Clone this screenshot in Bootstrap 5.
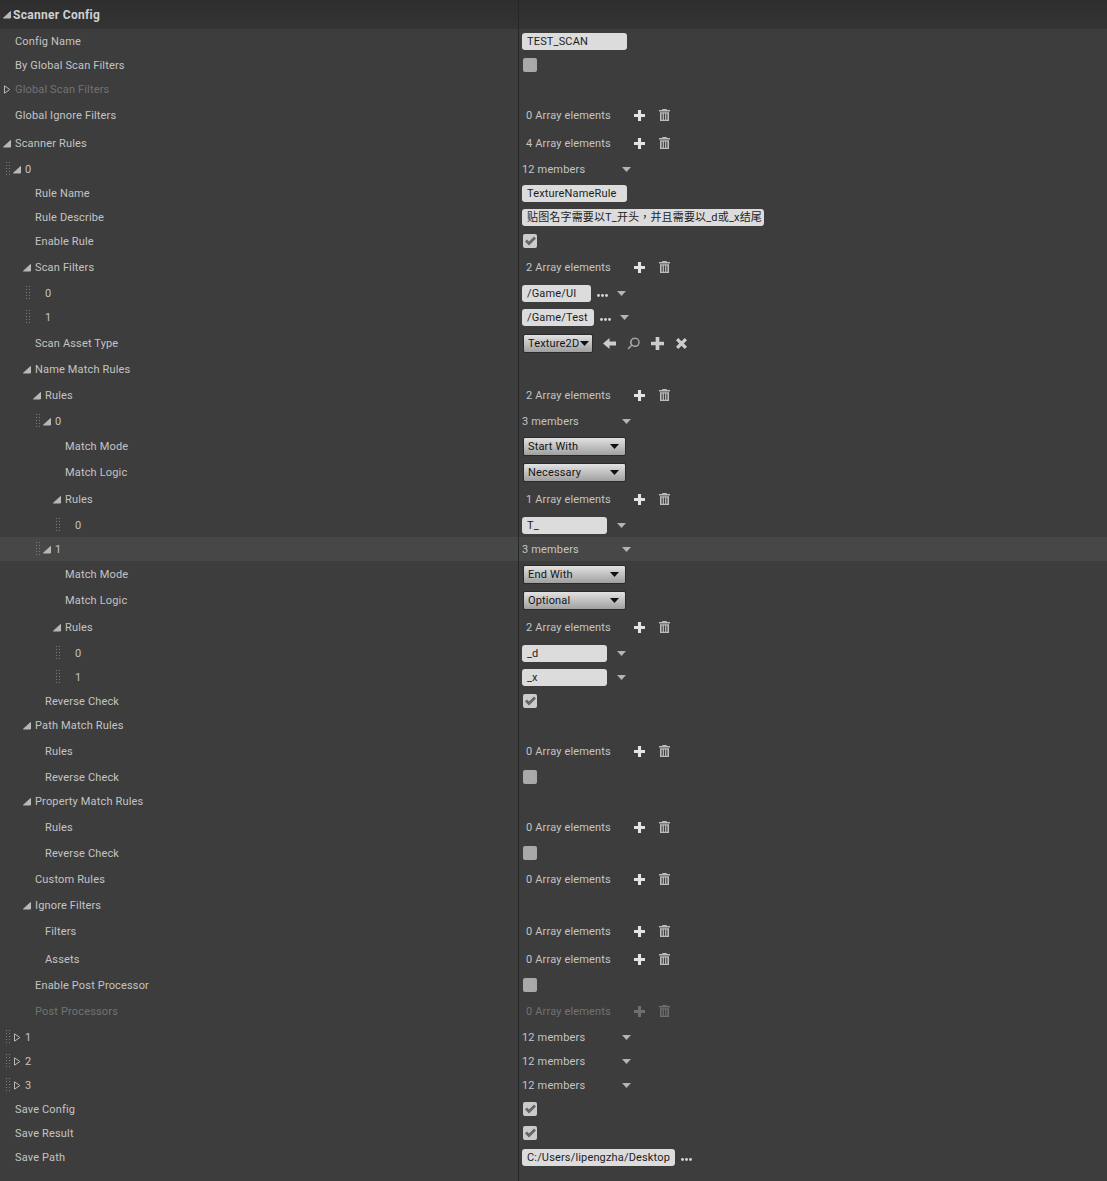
<!DOCTYPE html>
<html lang="zh">
<head>
<meta charset="UTF-8">
<title>Scanner Config</title>
<link href="https://cdn.jsdelivr.net/npm/bootstrap@5.3.0/dist/css/bootstrap.min.css" rel="stylesheet">
<style>
    body { background: #3d3d3d; color: #c4c4c4; font: 11px/1 Roboto, "Noto Sans CJK TC", sans-serif; letter-spacing: .16px; min-height: 1181px; }
    .dp-head { height: 29px; background: linear-gradient(#2e2e2e, #343434); color: #d0d0d0; font-size: 12px; font-weight: 700; letter-spacing: .3px; }
    .dp-head .dp-name { padding-left: 3px; }
    .dp-head .dp-text { margin-left: -2px; }
    .dp-name { width: 518px; height: 100%; flex: none; }
    .dp-val { border-left: 1px solid #262626; height: 100%; padding-left: 3px; flex: 1; }
    .dp-tail { height: 12px; }
    .rh24 { height: 24px; } .rh26 { height: 26px; } .rh28 { height: 28px; }
    .dp-hover { background: #474747; }
    .dp-off { color: #727272; }
    .t15 { padding-left: 3px; } .t25 { padding-left: 13px; } .t35 { padding-left: 23px; }
    .t45 { padding-left: 33px; } .t55 { padding-left: 43px; } .t65 { padding-left: 53px; } .t75 { padding-left: 63px; }
    .twist { width: 12px; height: 9px; flex: none; display: flex; }
    .twist svg { width: 8px; height: 9px; fill: #b8b8b8; stroke: #b8b8b8; }
    .twist.shut svg { fill: none; }
    .grip { width: 4px; height: 14px; margin-left: -7px; margin-right: 3px; flex: none;
        background: repeating-linear-gradient(#7c7c7c 0 1px, transparent 1px 3px) left / 1px 100% no-repeat,
                    repeating-linear-gradient(#7c7c7c 0 1px, transparent 1px 3px) right / 1px 100% no-repeat; }
    .field { height: 17px; background: #dcdcdc; color: #1c1c1c; border-radius: 3px; padding-left: 5px; flex: none; display: flex; align-items: center; white-space: nowrap; }
    .w105 { width: 105px; } .w85 { width: 85px; } .w69 { width: 69px; } .w72 { width: 72px; } .w153 { width: 153px; } .w242 { width: 242px; }
    .tick { width: 14px; height: 14px; margin-left: 1px; border-radius: 2px; background: #a9a9a9; flex: none; display: flex; align-items: center; justify-content: center; }
    .tick.on { background: #cbcbcb; }
    .tick svg { width: 11px; height: 10px; fill: #666; }
    .arr-txt { width: 112px; padding-left: 4px; flex: none; }
    .ico-plus { width: 11px; height: 11px; fill: #e4e4e4; flex: none; }
    .ico-bin { width: 11px; height: 12px; margin-left: 14px; fill: #bdbdbd; flex: none; }
    .dp-off .ico-plus, .dp-off .ico-bin { fill: #6e6e6e; }
    .mem-txt { width: 100px; flex: none; }
    .tri { width: 9px; height: 5px; fill: #b4b4b4; flex: none; }
    .dots { width: 11px; height: 3px; margin: 4px 0 0 6px; fill: #d8d8d8; flex: none; }
    .dots + .tri { margin-left: 9px; }
    .field + .tri { margin-left: 10px; }
    .combo { height: 19px; margin-left: 1px; background: linear-gradient(#e2e2e2, #a0a0a0); color: #151515; border: 1px solid #2a2a2a; border-radius: 2px; padding: 0 5px 0 4px; display: flex; align-items: center; justify-content: space-between; flex: none; }
    .combo svg { width: 11px; height: 5px; fill: #111; flex: none; }
    .cb-wide { width: 103px; }
    .cb-tex { width: 70px; padding-right: 2px; }
    .tool { fill: #cdcdcd; width: 13px; height: 13px; flex: none; }
    .tool-a { margin-left: 10px; } .tool-b { margin-left: 11px; }
    .tool-dim { fill: #a2a2a2; }
</style>
</head>
<body>
<svg class="d-none">
    <symbol id="i-open" viewBox="0 0 8 9"><path d="M7.5 1.5V8H.5z"/></symbol>
    <symbol id="i-shut" viewBox="0 0 8 9"><path d="M1.5.8 6.8 4.5 1.5 8.2z"/></symbol>
    <symbol id="i-check" viewBox="0 0 11 10"><path d="M0 5.5 2 3.5 4 5.6 9 .5 11 2.4 4 9.5z"/></symbol>
    <symbol id="i-plus" viewBox="0 0 12 12"><path d="M4.3 0h3.4v4.3H12v3.4H7.7V12H4.3V7.7H0V4.3h4.3z"/></symbol>
    <symbol id="i-bin" viewBox="0 0 11 12"><path d="M3.5 0h4l.5 1h3v1.5H0V1h3zM1 3.3h9V12H1zM2.6 4.5V10.8h1.1V4.5zM4.9 4.5V10.8h1.2V4.5zM7.3 4.5V10.8h1.1V4.5z" fill-rule="evenodd"/></symbol>
    <symbol id="i-tri" viewBox="0 0 9 5"><path d="M0 0h9L4.5 5z"/></symbol>
    <symbol id="i-dots" viewBox="0 0 11 3"><circle cx="1.5" cy="1.5" r="1.4"/><circle cx="5.5" cy="1.5" r="1.4"/><circle cx="9.5" cy="1.5" r="1.4"/></symbol>
    <symbol id="i-back" viewBox="0 0 13 13"><path d="M6.5 1v3.5H13v4H6.5V12L0 6.5z"/></symbol>
    <symbol id="i-find" viewBox="0 0 13 13"><path fill-rule="evenodd" d="M8 .5a4.8 4.8 0 1 1-3 8.6L1.7 12.4.6 11.3 3.8 8A4.8 4.8 0 0 1 8 .5zm0 1.5a3.3 3.3 0 1 0 0 6.6A3.3 3.3 0 0 0 8 2z"/></symbol>
    <symbol id="i-cross" viewBox="0 0 13 13"><path d="M3.3 1 6.5 4.2 9.7 1l2.3 2.3-3.2 3.2 3.2 3.2L9.7 12 6.5 8.8 3.3 12 1 9.7l3.2-3.2L1 3.3z"/></symbol>
</svg>

<div class="dp-head d-flex align-items-center">
    <div class="dp-name d-flex align-items-center"><span class="twist"><svg><use href="#i-open"/></svg></span><span class="dp-text">Scanner Config</span></div>
    <div class="dp-val"></div>
</div>

<div class="d-flex align-items-center rh24">
    <div class="dp-name d-flex align-items-center t15"><span class="twist"></span>Config Name</div>
    <div class="dp-val d-flex align-items-center"><div class="field w105">TEST_SCAN</div></div>
</div>
<div class="d-flex align-items-center rh24">
    <div class="dp-name d-flex align-items-center t15"><span class="twist"></span>By Global Scan Filters</div>
    <div class="dp-val d-flex align-items-center"><span class="tick"></span></div>
</div>
<div class="d-flex align-items-center rh24">
    <div class="dp-name d-flex align-items-center t15 dp-off"><span class="twist shut"><svg><use href="#i-shut"/></svg></span>Global Scan Filters</div>
    <div class="dp-val d-flex align-items-center"></div>
</div>
<div class="d-flex align-items-center rh28">
    <div class="dp-name d-flex align-items-center t15"><span class="twist"></span>Global Ignore Filters</div>
    <div class="dp-val d-flex align-items-center"><span class="arr-txt">0 Array elements</span><svg class="ico-plus"><use href="#i-plus"/></svg><svg class="ico-bin"><use href="#i-bin"/></svg></div>
</div>
<div class="d-flex align-items-center rh28">
    <div class="dp-name d-flex align-items-center t15"><span class="twist"><svg><use href="#i-open"/></svg></span>Scanner Rules</div>
    <div class="dp-val d-flex align-items-center"><span class="arr-txt">4 Array elements</span><svg class="ico-plus"><use href="#i-plus"/></svg><svg class="ico-bin"><use href="#i-bin"/></svg></div>
</div>
<div class="d-flex align-items-center rh24">
    <div class="dp-name d-flex align-items-center t25"><span class="grip"></span><span class="twist"><svg><use href="#i-open"/></svg></span>0</div>
    <div class="dp-val d-flex align-items-center"><span class="mem-txt">12 members</span><svg class="tri"><use href="#i-tri"/></svg></div>
</div>
<div class="d-flex align-items-center rh24">
    <div class="dp-name d-flex align-items-center t35"><span class="twist"></span>Rule Name</div>
    <div class="dp-val d-flex align-items-center"><div class="field w105">TextureNameRule</div></div>
</div>
<div class="d-flex align-items-center rh24">
    <div class="dp-name d-flex align-items-center t35"><span class="twist"></span>Rule Describe</div>
    <div class="dp-val d-flex align-items-center"><div class="field w242" lang="zh-TW">贴图名字需要以T_开头，并且需要以_d或_x结尾</div></div>
</div>
<div class="d-flex align-items-center rh24">
    <div class="dp-name d-flex align-items-center t35"><span class="twist"></span>Enable Rule</div>
    <div class="dp-val d-flex align-items-center"><span class="tick on"><svg><use href="#i-check"/></svg></span></div>
</div>
<div class="d-flex align-items-center rh28">
    <div class="dp-name d-flex align-items-center t35"><span class="twist"><svg><use href="#i-open"/></svg></span>Scan Filters</div>
    <div class="dp-val d-flex align-items-center"><span class="arr-txt">2 Array elements</span><svg class="ico-plus"><use href="#i-plus"/></svg><svg class="ico-bin"><use href="#i-bin"/></svg></div>
</div>
<div class="d-flex align-items-center rh24">
    <div class="dp-name d-flex align-items-center t45"><span class="grip"></span><span class="twist"></span>0</div>
    <div class="dp-val d-flex align-items-center"><div class="field w69">/Game/UI</div><svg class="dots"><use href="#i-dots"/></svg><svg class="tri"><use href="#i-tri"/></svg></div>
</div>
<div class="d-flex align-items-center rh24">
    <div class="dp-name d-flex align-items-center t45"><span class="grip"></span><span class="twist"></span>1</div>
    <div class="dp-val d-flex align-items-center"><div class="field w72">/Game/Test</div><svg class="dots"><use href="#i-dots"/></svg><svg class="tri"><use href="#i-tri"/></svg></div>
</div>
<div class="d-flex align-items-center rh28">
    <div class="dp-name d-flex align-items-center t35"><span class="twist"></span>Scan Asset Type</div>
    <div class="dp-val d-flex align-items-center"><div class="combo cb-tex">Texture2D<svg><use href="#i-tri"/></svg></div><svg class="tool tool-a"><use href="#i-back"/></svg><svg class="tool tool-b tool-dim"><use href="#i-find"/></svg><svg class="tool tool-b"><use href="#i-plus"/></svg><svg class="tool tool-b"><use href="#i-cross"/></svg></div>
</div>
<div class="d-flex align-items-center rh24">
    <div class="dp-name d-flex align-items-center t35"><span class="twist"><svg><use href="#i-open"/></svg></span>Name Match Rules</div>
    <div class="dp-val d-flex align-items-center"></div>
</div>
<div class="d-flex align-items-center rh28">
    <div class="dp-name d-flex align-items-center t45"><span class="twist"><svg><use href="#i-open"/></svg></span>Rules</div>
    <div class="dp-val d-flex align-items-center"><span class="arr-txt">2 Array elements</span><svg class="ico-plus"><use href="#i-plus"/></svg><svg class="ico-bin"><use href="#i-bin"/></svg></div>
</div>
<div class="d-flex align-items-center rh24">
    <div class="dp-name d-flex align-items-center t55"><span class="grip"></span><span class="twist"><svg><use href="#i-open"/></svg></span>0</div>
    <div class="dp-val d-flex align-items-center"><span class="mem-txt">3 members</span><svg class="tri"><use href="#i-tri"/></svg></div>
</div>
<div class="d-flex align-items-center rh26">
    <div class="dp-name d-flex align-items-center t65"><span class="twist"></span>Match Mode</div>
    <div class="dp-val d-flex align-items-center"><div class="combo cb-wide">Start With<svg><use href="#i-tri"/></svg></div></div>
</div>
<div class="d-flex align-items-center rh26">
    <div class="dp-name d-flex align-items-center t65"><span class="twist"></span>Match Logic</div>
    <div class="dp-val d-flex align-items-center"><div class="combo cb-wide">Necessary<svg><use href="#i-tri"/></svg></div></div>
</div>
<div class="d-flex align-items-center rh28">
    <div class="dp-name d-flex align-items-center t65"><span class="twist"><svg><use href="#i-open"/></svg></span>Rules</div>
    <div class="dp-val d-flex align-items-center"><span class="arr-txt">1 Array elements</span><svg class="ico-plus"><use href="#i-plus"/></svg><svg class="ico-bin"><use href="#i-bin"/></svg></div>
</div>
<div class="d-flex align-items-center rh24">
    <div class="dp-name d-flex align-items-center t75"><span class="grip"></span><span class="twist"></span>0</div>
    <div class="dp-val d-flex align-items-center"><div class="field w85">T_</div><svg class="tri"><use href="#i-tri"/></svg></div>
</div>
<div class="d-flex align-items-center rh24 dp-hover">
    <div class="dp-name d-flex align-items-center t55"><span class="grip"></span><span class="twist"><svg><use href="#i-open"/></svg></span>1</div>
    <div class="dp-val d-flex align-items-center"><span class="mem-txt">3 members</span><svg class="tri"><use href="#i-tri"/></svg></div>
</div>
<div class="d-flex align-items-center rh26">
    <div class="dp-name d-flex align-items-center t65"><span class="twist"></span>Match Mode</div>
    <div class="dp-val d-flex align-items-center"><div class="combo cb-wide">End With<svg><use href="#i-tri"/></svg></div></div>
</div>
<div class="d-flex align-items-center rh26">
    <div class="dp-name d-flex align-items-center t65"><span class="twist"></span>Match Logic</div>
    <div class="dp-val d-flex align-items-center"><div class="combo cb-wide">Optional<svg><use href="#i-tri"/></svg></div></div>
</div>
<div class="d-flex align-items-center rh28">
    <div class="dp-name d-flex align-items-center t65"><span class="twist"><svg><use href="#i-open"/></svg></span>Rules</div>
    <div class="dp-val d-flex align-items-center"><span class="arr-txt">2 Array elements</span><svg class="ico-plus"><use href="#i-plus"/></svg><svg class="ico-bin"><use href="#i-bin"/></svg></div>
</div>
<div class="d-flex align-items-center rh24">
    <div class="dp-name d-flex align-items-center t75"><span class="grip"></span><span class="twist"></span>0</div>
    <div class="dp-val d-flex align-items-center"><div class="field w85">_d</div><svg class="tri"><use href="#i-tri"/></svg></div>
</div>
<div class="d-flex align-items-center rh24">
    <div class="dp-name d-flex align-items-center t75"><span class="grip"></span><span class="twist"></span>1</div>
    <div class="dp-val d-flex align-items-center"><div class="field w85">_x</div><svg class="tri"><use href="#i-tri"/></svg></div>
</div>
<div class="d-flex align-items-center rh24">
    <div class="dp-name d-flex align-items-center t45"><span class="twist"></span>Reverse Check</div>
    <div class="dp-val d-flex align-items-center"><span class="tick on"><svg><use href="#i-check"/></svg></span></div>
</div>
<div class="d-flex align-items-center rh24">
    <div class="dp-name d-flex align-items-center t35"><span class="twist"><svg><use href="#i-open"/></svg></span>Path Match Rules</div>
    <div class="dp-val d-flex align-items-center"></div>
</div>
<div class="d-flex align-items-center rh28">
    <div class="dp-name d-flex align-items-center t45"><span class="twist"></span>Rules</div>
    <div class="dp-val d-flex align-items-center"><span class="arr-txt">0 Array elements</span><svg class="ico-plus"><use href="#i-plus"/></svg><svg class="ico-bin"><use href="#i-bin"/></svg></div>
</div>
<div class="d-flex align-items-center rh24">
    <div class="dp-name d-flex align-items-center t45"><span class="twist"></span>Reverse Check</div>
    <div class="dp-val d-flex align-items-center"><span class="tick"></span></div>
</div>
<div class="d-flex align-items-center rh24">
    <div class="dp-name d-flex align-items-center t35"><span class="twist"><svg><use href="#i-open"/></svg></span>Property Match Rules</div>
    <div class="dp-val d-flex align-items-center"></div>
</div>
<div class="d-flex align-items-center rh28">
    <div class="dp-name d-flex align-items-center t45"><span class="twist"></span>Rules</div>
    <div class="dp-val d-flex align-items-center"><span class="arr-txt">0 Array elements</span><svg class="ico-plus"><use href="#i-plus"/></svg><svg class="ico-bin"><use href="#i-bin"/></svg></div>
</div>
<div class="d-flex align-items-center rh24">
    <div class="dp-name d-flex align-items-center t45"><span class="twist"></span>Reverse Check</div>
    <div class="dp-val d-flex align-items-center"><span class="tick"></span></div>
</div>
<div class="d-flex align-items-center rh28">
    <div class="dp-name d-flex align-items-center t35"><span class="twist"></span>Custom Rules</div>
    <div class="dp-val d-flex align-items-center"><span class="arr-txt">0 Array elements</span><svg class="ico-plus"><use href="#i-plus"/></svg><svg class="ico-bin"><use href="#i-bin"/></svg></div>
</div>
<div class="d-flex align-items-center rh24">
    <div class="dp-name d-flex align-items-center t35"><span class="twist"><svg><use href="#i-open"/></svg></span>Ignore Filters</div>
    <div class="dp-val d-flex align-items-center"></div>
</div>
<div class="d-flex align-items-center rh28">
    <div class="dp-name d-flex align-items-center t45"><span class="twist"></span>Filters</div>
    <div class="dp-val d-flex align-items-center"><span class="arr-txt">0 Array elements</span><svg class="ico-plus"><use href="#i-plus"/></svg><svg class="ico-bin"><use href="#i-bin"/></svg></div>
</div>
<div class="d-flex align-items-center rh28">
    <div class="dp-name d-flex align-items-center t45"><span class="twist"></span>Assets</div>
    <div class="dp-val d-flex align-items-center"><span class="arr-txt">0 Array elements</span><svg class="ico-plus"><use href="#i-plus"/></svg><svg class="ico-bin"><use href="#i-bin"/></svg></div>
</div>
<div class="d-flex align-items-center rh24">
    <div class="dp-name d-flex align-items-center t35"><span class="twist"></span>Enable Post Processor</div>
    <div class="dp-val d-flex align-items-center"><span class="tick"></span></div>
</div>
<div class="d-flex align-items-center rh28 dp-off">
    <div class="dp-name d-flex align-items-center t35"><span class="twist"></span>Post Processors</div>
    <div class="dp-val d-flex align-items-center"><span class="arr-txt">0 Array elements</span><svg class="ico-plus"><use href="#i-plus"/></svg><svg class="ico-bin"><use href="#i-bin"/></svg></div>
</div>
<div class="d-flex align-items-center rh24">
    <div class="dp-name d-flex align-items-center t25"><span class="grip"></span><span class="twist shut"><svg><use href="#i-shut"/></svg></span>1</div>
    <div class="dp-val d-flex align-items-center"><span class="mem-txt">12 members</span><svg class="tri"><use href="#i-tri"/></svg></div>
</div>
<div class="d-flex align-items-center rh24">
    <div class="dp-name d-flex align-items-center t25"><span class="grip"></span><span class="twist shut"><svg><use href="#i-shut"/></svg></span>2</div>
    <div class="dp-val d-flex align-items-center"><span class="mem-txt">12 members</span><svg class="tri"><use href="#i-tri"/></svg></div>
</div>
<div class="d-flex align-items-center rh24">
    <div class="dp-name d-flex align-items-center t25"><span class="grip"></span><span class="twist shut"><svg><use href="#i-shut"/></svg></span>3</div>
    <div class="dp-val d-flex align-items-center"><span class="mem-txt">12 members</span><svg class="tri"><use href="#i-tri"/></svg></div>
</div>
<div class="d-flex align-items-center rh24">
    <div class="dp-name d-flex align-items-center t15"><span class="twist"></span>Save Config</div>
    <div class="dp-val d-flex align-items-center"><span class="tick on"><svg><use href="#i-check"/></svg></span></div>
</div>
<div class="d-flex align-items-center rh24">
    <div class="dp-name d-flex align-items-center t15"><span class="twist"></span>Save Result</div>
    <div class="dp-val d-flex align-items-center"><span class="tick on"><svg><use href="#i-check"/></svg></span></div>
</div>
<div class="d-flex align-items-center rh24">
    <div class="dp-name d-flex align-items-center t15"><span class="twist"></span>Save Path</div>
    <div class="dp-val d-flex align-items-center"><div class="field w153">C:/Users/lipengzha/Desktop</div><svg class="dots"><use href="#i-dots"/></svg></div>
</div>
<div class="d-flex dp-tail">
    <div class="dp-name"></div>
    <div class="dp-val"></div>
</div>
<script src="https://cdn.jsdelivr.net/npm/bootstrap@5.3.0/dist/js/bootstrap.bundle.min.js"></script>
</body>
</html>
